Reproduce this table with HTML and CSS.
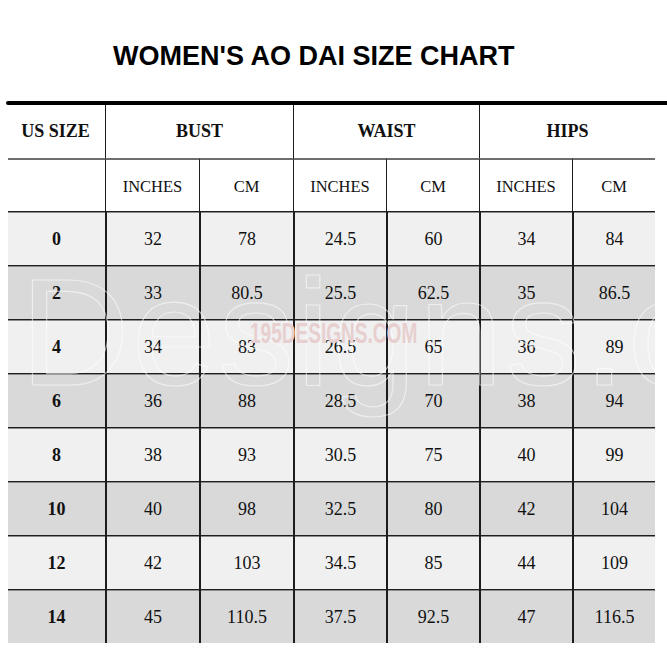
FILE: index.html
```html
<!DOCTYPE html>
<html>
<head>
<meta charset="utf-8">
<link rel="stylesheet" href="styles.css">
</head>
<body>
<div class="page">
  <h1 class="title">WOMEN'S AO DAI SIZE CHART</h1>
  <div class="rule"></div>
  <div class="chart">
    <div class="grid">
      <div class="cell head first">US SIZE</div>
      <div class="cell head span2">BUST</div>
      <div class="cell head span2">WAIST</div>
      <div class="cell head span2">HIPS</div>

      <div class="cell sub first line-gray"></div>
      <div class="cell sub line-gray">INCHES</div>
      <div class="cell sub line-gray">CM</div>
      <div class="cell sub line-gray">INCHES</div>
      <div class="cell sub line-gray">CM</div>
      <div class="cell sub line-gray">INCHES</div>
      <div class="cell sub line-gray">CM</div>

      <div class="cell num size first light">0</div><div class="cell num light">32</div><div class="cell num light">78</div><div class="cell num light">24.5</div><div class="cell num light">60</div><div class="cell num light">34</div><div class="cell num light">84</div>
      <div class="cell num size first dark">2</div><div class="cell num dark">33</div><div class="cell num dark">80.5</div><div class="cell num dark">25.5</div><div class="cell num dark">62.5</div><div class="cell num dark">35</div><div class="cell num dark">86.5</div>
      <div class="cell num size first light">4</div><div class="cell num light">34</div><div class="cell num light">83</div><div class="cell num light">26.5</div><div class="cell num light">65</div><div class="cell num light">36</div><div class="cell num light">89</div>
      <div class="cell num size first dark">6</div><div class="cell num dark">36</div><div class="cell num dark">88</div><div class="cell num dark">28.5</div><div class="cell num dark">70</div><div class="cell num dark">38</div><div class="cell num dark">94</div>
      <div class="cell num size first light">8</div><div class="cell num light">38</div><div class="cell num light">93</div><div class="cell num light">30.5</div><div class="cell num light">75</div><div class="cell num light">40</div><div class="cell num light">99</div>
      <div class="cell num size first dark">10</div><div class="cell num dark">40</div><div class="cell num dark">98</div><div class="cell num dark">32.5</div><div class="cell num dark">80</div><div class="cell num dark">42</div><div class="cell num dark">104</div>
      <div class="cell num size first light">12</div><div class="cell num light">42</div><div class="cell num light">103</div><div class="cell num light">34.5</div><div class="cell num light">85</div><div class="cell num light">44</div><div class="cell num light">109</div>
      <div class="cell num size first dark">14</div><div class="cell num dark">45</div><div class="cell num dark">110.5</div><div class="cell num dark">37.5</div><div class="cell num dark">92.5</div><div class="cell num dark">47</div><div class="cell num dark">116.5</div>
    </div>
    <div class="wm-big">Designs.c</div>
    <div class="wm-small">195DESIGNS.COM</div>
  </div>
</div>
</body>
</html>
```

FILE: styles.css
```css
html, body {
  margin: 0;
  padding: 0;
  background: #fff;
}
.page {
  width: 667px;
  height: 667px;
  overflow: hidden;
  position: relative;
}
.title {
  margin: 0;
  padding: 40px 0 0 113px;
  height: 32px;
  font-family: "Liberation Sans", Arial, sans-serif;
  font-weight: bold;
  font-size: 27px;
  line-height: 32px;
  color: #000;
  white-space: nowrap;
}
.rule {
  margin: 29px 0 0 6px;
  height: 4px;
  background: #000;
  border-radius: 2px 0 0 2px;
}
.chart {
  position: relative;
  margin-left: 8px;
  width: 647px;
}
.grid {
  display: grid;
  grid-template-columns: 97px 94px 94px 93px 93px 93px 83px;
  grid-template-rows: 53px 53px repeat(8, 54px);
}
.cell {
  box-sizing: border-box;
  display: flex;
  align-items: center;
  justify-content: center;
  border-left: 2px solid #1c1c1c;
  border-top: 2px solid #3a3a3a;
  font-family: "Liberation Serif", "Times New Roman", serif;
  color: #111;
}
.cell.first {
  border-left: none;
}
.head {
  border-top: none;
  border-left-width: 1px;
  font-weight: bold;
  font-size: 18px;
  background: #fff;
}
.head.first { padding-right: 2px; }
.span2 {
  grid-column: span 2;
}
.sub {
  border-left-width: 1px;
  font-size: 16.5px;
  background: #fff;
  padding-top: 2px;
}
.line-gray {
  border-top: 2px solid #6e6e6e;
}
.num {
  font-size: 18px;
  border-top: 1px solid #1e1e1e;
  box-shadow: inset 0 1px 0 #8c8c8c;
  padding-top: 1px;
}
.size {
  font-weight: bold;
}
.light { background: #f0f0f0; }
.dark { background: #d9d9d9; }

.wm-big {
  position: absolute;
  left: 12px;
  top: 151px;
  font-family: "Liberation Sans", Arial, sans-serif;
  font-size: 152px;
  line-height: 1;
  letter-spacing: 2px;
  color: transparent;
  -webkit-text-stroke: 1.2px rgba(255, 255, 255, 0.55);
  white-space: nowrap;
  pointer-events: none;
}
.wm-small {
  position: absolute;
  left: 242px;
  top: 213px;
  font-family: "Liberation Sans", Arial, sans-serif;
  font-weight: bold;
  font-size: 30px;
  line-height: 1;
  color: #e7cfcf;
  transform: scaleX(0.635);
  transform-origin: left top;
  white-space: nowrap;
  pointer-events: none;
}
```
